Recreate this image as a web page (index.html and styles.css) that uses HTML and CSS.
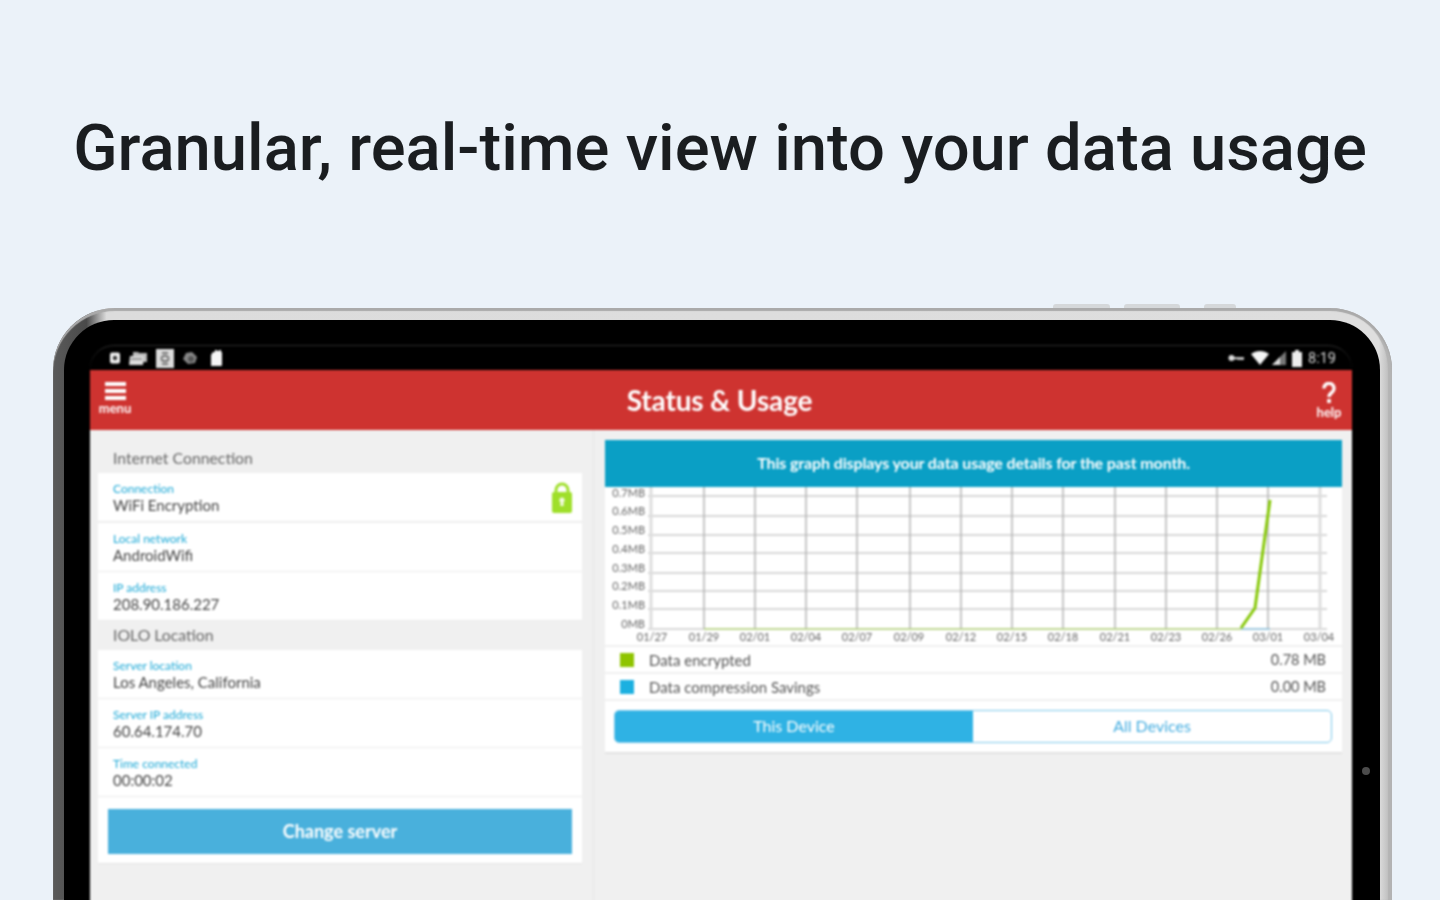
FILE: index.html
```html
<!DOCTYPE html>
<html lang="en">
<head>
    <meta charset="UTF-8">
    <meta name="viewport" content="width=device-width, initial-scale=1.0">
    <title>Status &amp; Usage</title>
    <link rel="stylesheet" href="styles.css">
</head>
<body>
    <div class="hero">
        <h1>Granular, real-time view into your data usage</h1>
    </div>
    <div class="device">
        <span class="side-btn side-btn-a"></span>
        <span class="side-btn side-btn-b"></span>
        <span class="side-btn side-btn-c"></span>
        <span class="camera"></span>
        <div class="bezel">
            <div class="screen">
                <div class="statusbar">
                    <div class="status-icons">
                        <svg width="12" height="12" viewBox="0 0 12 12"><rect x="1" y="0.5" width="10" height="11" rx="2" fill="#f2f2f2"/><circle cx="6" cy="6" r="2.2" fill="#333"/></svg>
                        <svg width="19" height="15" viewBox="0 0 19 15"><path d="M4 1h5l1 1h8v9H4z" fill="#bbb"/><path d="M1 5h14l-1 9H0z" fill="#ddd"/><path d="M2 8h11" stroke="#555" stroke-width="1"/></svg>
                        <svg width="18" height="19" viewBox="0 0 18 19"><rect width="18" height="19" fill="#dcdcdc"/><path d="M6 4h6M5 9c2-3 6-3 8 0M5 10c2 3 6 3 8 0M6 15h6" stroke="#555" stroke-width="1.6" fill="none"/></svg>
                        <svg width="16" height="14" viewBox="0 0 16 14"><path d="M4 2l6-1 5 5-2 6-7 1-5-5z" fill="#888"/><circle cx="9" cy="8" r="3" fill="#555"/></svg>
                        <svg class="sd-icon" width="13" height="16" viewBox="0 0 13 16"><path d="M3 2h2V0h2v1h2V0h2v2h1v13a1 1 0 0 1-1 1H1V5z" fill="#f5f5f5"/></svg>
                    </div>
                    <div class="status-icons status-right">
                        <svg class="key-icon" width="16" height="8" viewBox="0 0 16 8"><circle cx="3.5" cy="4" r="3" fill="#ddd"/><path d="M6 3.2h10v2l-2 1-1.5-1-1.5 1-1.5-1H6z" fill="#ddd"/></svg>
                        <svg class="wifi-icon" width="18" height="14" viewBox="0 0 18 14"><path d="M0 3c5-4 13-4 18 0l-9 11z" fill="#f5f5f5"/></svg>
                        <svg width="14" height="14" viewBox="0 0 14 14"><path d="M0 14L14 0v14z" fill="#777"/><path d="M0 14l8-8v8z" fill="#ddd"/></svg>
                        <svg width="10" height="17" viewBox="0 0 10 17"><path d="M3 0h4v2h3v15H0V2h3z" fill="#eee"/></svg>
                        <span class="status-time">8:19</span>
                    </div>
                </div>
                <div class="toolbar">
                    <div class="tool tool-menu">
                        <span class="menu-icon"><i></i><i></i><i></i></span>
                        <span class="tool-label">menu</span>
                    </div>
                    <div class="toolbar-title">Status &amp; Usage</div>
                    <div class="tool tool-help">
                        <svg class="help-icon" width="14" height="21" viewBox="0 0 14 21"><path d="M2 6.5a5 5 0 1 1 8 3.8c-2 1.500-3 2.200-3 4.700" fill="none" stroke="#fff" stroke-width="3.4"/><rect x="5.200" y="17" width="3.600" height="4" fill="#fff"/></svg>
                        <span class="tool-label">help</span>
                    </div>
                </div>
                <div class="content">
                    <div class="col-left">
                        <div class="section-title first">Internet Connection</div>
                        <div class="row has-lock">
                            <div>
                                <div class="label">Connection</div>
                                <div class="value">WiFi Encryption</div>
                            </div>
                            <svg class="lock" width="22" height="31" viewBox="0 0 22 31">
                                <path d="M5 12V8a6 6 0 0 1 12 0v4" fill="none" stroke="#9fdf2a" stroke-width="3"/>
                                <rect x="1" y="10" width="20" height="21" rx="2" fill="#9fdf2a"/>
                                <circle cx="11" cy="18" r="2.6" fill="#f4fbe4"/>
                                <path d="M9.8 19h2.4l.6 5H9.2z" fill="#f4fbe4"/>
                            </svg>
                        </div>
                        <div class="row">
                            <div class="label">Local network</div>
                            <div class="value">AndroidWifi</div>
                        </div>
                        <div class="row">
                            <div class="label">IP address</div>
                            <div class="value">208.90.186.227</div>
                        </div>
                        <div class="section-title">IOLO Location</div>
                        <div class="row">
                            <div class="label">Server location</div>
                            <div class="value">Los Angeles, California</div>
                        </div>
                        <div class="row">
                            <div class="label">Server IP address</div>
                            <div class="value">60.64.174.70</div>
                        </div>
                        <div class="row">
                            <div class="label">Time connected</div>
                            <div class="value">00:00:02</div>
                        </div>
                        <div class="button-card">
                            <div class="change-btn">Change server</div>
                        </div>
                    </div>
                    <div class="col-right">
                        <div class="banner">This graph displays your data usage details for the past month.</div>
                        <svg class="chart" width="737" height="158" viewBox="605 487 737 158">
                            <g class="grid">
                                <line class="horizontal" x1="648" y1="496" x2="1327" y2="496"/>
                                <line class="horizontal" x1="648" y1="516" x2="1327" y2="516"/>
                                <line class="horizontal" x1="648" y1="535" x2="1327" y2="535"/>
                                <line class="horizontal" x1="648" y1="553" x2="1327" y2="553"/>
                                <line class="horizontal" x1="648" y1="573" x2="1327" y2="573"/>
                                <line class="horizontal" x1="648" y1="591" x2="1327" y2="591"/>
                                <line class="horizontal" x1="648" y1="609" x2="1327" y2="609"/>
                                <line class="horizontal" x1="648" y1="629" x2="1327" y2="629"/>
                                <line class="faint" x1="651" y1="487" x2="651" y2="629"/>
                                <line x1="704" y1="487" x2="704" y2="629"/>
                                <line x1="755" y1="487" x2="755" y2="629"/>
                                <line x1="806" y1="487" x2="806" y2="629"/>
                                <line x1="857" y1="487" x2="857" y2="629"/>
                                <line x1="910" y1="487" x2="910" y2="629"/>
                                <line x1="961" y1="487" x2="961" y2="629"/>
                                <line x1="1012" y1="487" x2="1012" y2="629"/>
                                <line x1="1063" y1="487" x2="1063" y2="629"/>
                                <line x1="1115" y1="487" x2="1115" y2="629"/>
                                <line x1="1166" y1="487" x2="1166" y2="629"/>
                                <line x1="1217" y1="487" x2="1217" y2="629"/>
                                <line x1="1268" y1="487" x2="1268" y2="629"/>
                                <line class="faint" x1="1320" y1="487" x2="1320" y2="629"/>
                            </g>
                            <polyline class="line-blue" points="1241,629 1270,629"/>
                            <polyline class="line-green-base" points="704,629 1241,629"/>
                            <polyline class="line-green" points="1241,628 1255,608 1270,500"/>
                            <g class="y-labels">
                                <text x="645" y="497">0.7MB</text>
                                <text x="645" y="515">0.6MB</text>
                                <text x="645" y="534">0.5MB</text>
                                <text x="645" y="553">0.4MB</text>
                                <text x="645" y="572">0.3MB</text>
                                <text x="645" y="590">0.2MB</text>
                                <text x="645" y="609">0.1MB</text>
                                <text x="645" y="628">0MB</text>
                            </g>
                            <g class="x-labels">
                                <text x="652" y="641">01/27</text>
                                <text x="704" y="641">01/29</text>
                                <text x="755" y="641">02/01</text>
                                <text x="806" y="641">02/04</text>
                                <text x="857" y="641">02/07</text>
                                <text x="909" y="641">02/09</text>
                                <text x="961" y="641">02/12</text>
                                <text x="1012" y="641">02/15</text>
                                <text x="1063" y="641">02/18</text>
                                <text x="1115" y="641">02/21</text>
                                <text x="1166" y="641">02/23</text>
                                <text x="1217" y="641">02/26</text>
                                <text x="1268" y="641">03/01</text>
                                <text x="1319" y="641">03/04</text>
                            </g>
                        </svg>
                        <div class="legend-row">
                            <span class="swatch swatch-green"></span>
                            <span class="legend-name">Data encrypted</span>
                            <span class="legend-value">0.78 MB</span>
                        </div>
                        <div class="legend-row">
                            <span class="swatch swatch-blue"></span>
                            <span class="legend-name">Data compression Savings</span>
                            <span class="legend-value">0.00 MB</span>
                        </div>
                        <div class="toggle-card">
                            <div class="toggle">
                                <div class="toggle-item active">This Device</div>
                                <div class="toggle-item">All Devices</div>
                            </div>
                        </div>
                    </div>
                </div>
            </div>
        </div>
    </div>
</body>
</html>
```

FILE: styles.css
```css
html, body {
    height: 900px;
    overflow: hidden;
}
body {
    margin: 0;
    background-color: #ebf2f9;
    font-family: Lato, "Open Sans", sans-serif;
}
.hero {
    height: 308px;
    padding-top: 112px;
    box-sizing: border-box;
    text-align: center;
}
h1 {
    margin: 0;
    font-family: Roboto, sans-serif;
    font-weight: 500;
    font-size: 65.2px;
    line-height: 72px;
    color: #1a1d20;
    white-space: nowrap;
    filter: blur(0.7px);
}
.device {
    position: relative;
    width: 1339px;
    height: 592px;
    margin-left: 53px;
    padding: 12px 12px 0 11px;
    box-sizing: border-box;
    border-radius: 62px 62px 0 0;
    background: linear-gradient(90deg, #5a5a5a 0, #4a4a4a 2.5%, #dcdcdc 4%, #dedede 99%, #b4b4b4 100%);
    box-shadow: inset 0 3px 1px #aaa, inset -4px 0 1px #b4b4b4;
}
.side-btn {
    position: absolute;
    top: -4px;
    height: 4px;
    background-color: #d5d8da;
    border-radius: 3px 3px 0 0;
}
.side-btn-a { left: 1000px; width: 57px; }
.side-btn-b { left: 1071px; width: 56px; }
.side-btn-c { left: 1151px; width: 32px; }
.camera {
    position: absolute;
    left: 1309px;
    top: 459px;
    width: 8px;
    height: 8px;
    border-radius: 50%;
    background-color: #4c4c4c;
    z-index: 2;
}
.bezel {
    height: 100%;
    padding: 25px 28px 0 26px;
    box-sizing: border-box;
    overflow: hidden;
    background-color: #000;
    border-radius: 50px 50px 0 0;
}
.screen {
    filter: blur(0.8px);
}
.statusbar {
    height: 25px;
    display: flex;
    justify-content: space-between;
    align-items: center;
    padding: 0 16px 0 19px;
    border-radius: 24px 24px 0 0;
    border-top: 1px solid #2c2c2c;
    box-sizing: border-box;
}
.status-icons {
    display: flex;
    align-items: center;
    gap: 8px;
}
.sd-icon {
    margin-left: 4px;
}
.status-right {
    gap: 6px;
}
.key-icon {
    margin-right: 1px;
}
.wifi-icon {
    margin-right: -3px;
}
.status-time {
    font-family: Roboto, sans-serif;
    font-size: 14.5px;
    color: #d8d8d8;
}
.toolbar {
    height: 60px;
    display: flex;
    align-items: center;
    background-color: #ce3330;
    color: #fff;
}
.toolbar-title {
    flex: 1;
    padding-right: 3px;
    text-align: center;
    font-size: 28px;
    font-weight: 700;
    letter-spacing: -0.15px;
}
.tool {
    width: 50px;
    display: flex;
    flex-direction: column;
    align-items: center;
}
.tool-label {
    font-size: 13px;
    font-weight: 700;
    line-height: 13px;
}
.tool-menu {
    margin-top: -3px;
}
.tool-help {
    padding-left: 4px;
    box-sizing: border-box;
}
.menu-icon {
    width: 21px;
    display: flex;
    flex-direction: column;
    gap: 3px;
    margin-bottom: 2px;
}
.menu-icon i {
    display: block;
    height: 4px;
    background-color: #fff;
}
.help-icon {
    margin-bottom: 3px;
}
.content {
    height: 480px;
    display: flex;
    background-color: #f0f0f0;
}
.col-left {
    width: 504px;
    padding: 0 11px 0 8px;
    box-sizing: border-box;
    border-right: 1px solid #e6e6e6;
}
.section-title {
    height: 29px;
    padding-left: 15px;
    line-height: 27px;
    font-size: 15.8px;
    color: #666;
}
.section-title.first {
    margin-top: 14px;
}
.row {
    height: 48px;
    margin-bottom: 1px;
    padding: 9px 0 0 15px;
    box-sizing: border-box;
    background-color: #fff;
    box-shadow: 0 1px 0 #ebebeb;
}
.row.has-lock {
    margin-bottom: 2px;
    display: flex;
    justify-content: space-between;
}
.lock {
    margin-right: 9px;
}
.label {
    font-size: 12px;
    line-height: 14px;
    color: #1ba8d6;
}
.value {
    font-size: 15px;
    line-height: 19px;
    color: #444;
}
.button-card {
    height: 66px;
    padding: 12px 10px 0;
    box-sizing: border-box;
    background-color: #fff;
    box-shadow: 0 1px 0 #e4e4e4;
}
.change-btn {
    height: 45px;
    line-height: 45px;
    text-align: center;
    font-size: 18px;
    font-weight: 700;
    color: #fff;
    background-color: #49b0dc;
}
.col-right {
    flex: 1;
    padding: 10px 10px 0 11px;
}
.banner {
    height: 47px;
    line-height: 46px;
    text-align: center;
    font-size: 16px;
    font-weight: 700;
    letter-spacing: -0.12px;
    color: #fff;
    background-color: #0a9fc5;
}
.chart {
    display: block;
    background-color: #fff;
}
.grid line {
    stroke: #b4b4b4;
    stroke-width: 1.5;
}
.grid line.horizontal {
    stroke: #cbcbcb;
}
.grid line.faint {
    stroke: #dedede;
    stroke-width: 3;
}
.line-green {
    fill: none;
    stroke: #86c808;
    stroke-width: 3;
}
.line-green-base {
    fill: none;
    stroke: #b7d77c;
    stroke-width: 1.5;
}
.line-blue {
    fill: none;
    stroke: #8cc4e0;
    stroke-width: 1.5;
}
.y-labels text {
    text-anchor: end;
    font-size: 11px;
    fill: #666;
}
.x-labels text {
    text-anchor: middle;
    font-size: 11px;
    fill: #666;
}
.legend-row {
    height: 25px;
    margin-top: 2px;
    padding: 0 16px 0 15px;
    display: flex;
    align-items: center;
    background-color: #fff;
    font-size: 15px;
    color: #555;
}
.swatch {
    width: 14px;
    height: 14px;
    margin-right: 15px;
}
.swatch-green { background-color: #8fc400; }
.swatch-blue { background-color: #1cb0e0; }
.legend-name {
    flex: 1;
}
.legend-value {
    font-size: 14.5px;
}
.toggle-card {
    height: 51px;
    margin-top: 2px;
    padding: 9px 10px 0 9px;
    box-sizing: border-box;
    background-color: #fff;
    box-shadow: 0 2px 0 #e2e2e2;
}
.toggle {
    height: 33px;
    display: flex;
    border: 1px solid #7cc8ea;
    border-radius: 5px;
    box-sizing: border-box;
    overflow: hidden;
}
.toggle-item {
    flex: 1;
    line-height: 30px;
    text-align: center;
    font-size: 16px;
    color: #45ade0;
}
.toggle-item.active {
    background-color: #2fb2e4;
    color: #fff;
}
```
